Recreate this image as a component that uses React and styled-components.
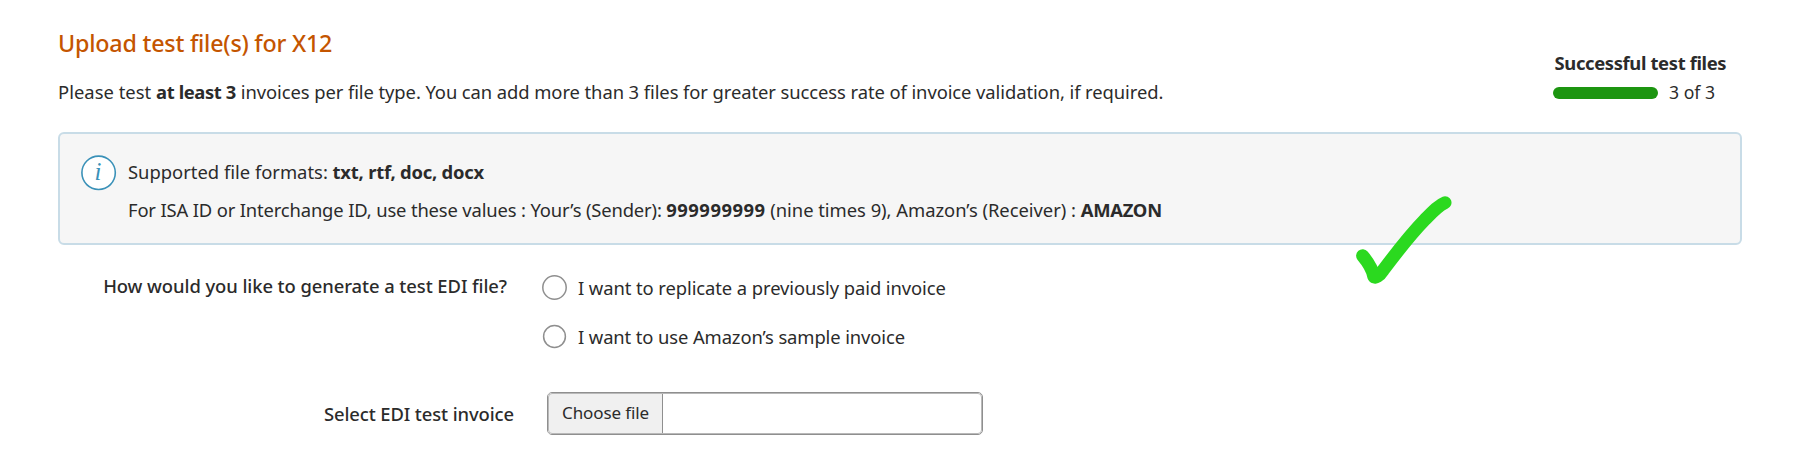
import React from 'react';
import styled, { createGlobalStyle } from 'styled-components';

const GlobalStyle = createGlobalStyle`
  *, *::before, *::after { box-sizing: border-box; }
  body {
    margin: 0;
    background: #fff;
    color: #2b2b2b;
    font-family: 'Noto Sans', 'Open Sans', sans-serif;
    font-size: 18.4px;
    line-height: 26px;
  }
`;

const Page = styled.main`
  position: relative;
  width: 1800px;
  height: 464px;
  padding: 27px 58px 0;
  overflow: hidden;
`;

const Header = styled.header`
  display: flex;
  justify-content: space-between;
  height: 105px;
`;

const Title = styled.h1`
  margin: 0 0 19px;
  font-size: 23.3px;
  line-height: 33px;
  font-weight: 500;
  letter-spacing: -0.22px;
  color: #c45500;
`;

const Line = styled.p`
  margin: 0;
  white-space: nowrap;
`;

const Run = styled.span`
  letter-spacing: ${({ $track }) => $track || 0}px;
`;

const Strong = styled.strong`
  font-weight: 700;
  letter-spacing: ${({ $track }) => $track || 0}px;
`;

const Status = styled.section`
  width: 189px;
  padding-top: 23px;
`;

const StatusTitle = styled.h2`
  margin: 0 0 3px 1.5px;
  font-size: 18.4px;
  line-height: 26px;
  font-weight: 700;
  letter-spacing: -0.35px;
`;

const Progress = styled.div`
  display: flex;
  align-items: center;
  gap: 11px;
  font-size: 17.6px;
`;

const Bar = styled.div`
  width: 105px;
  height: 12px;
  margin-top: 2px;
  border-radius: 6px;
  background: #1c9510;
`;

const Notice = styled.section`
  display: flex;
  gap: 11px;
  width: 1684px;
  height: 113px;
  padding: 21px 21px 0;
  border: 2px solid #c8dce7;
  border-radius: 6px;
  background: #f6f6f6;
`;

const InfoIcon = styled.svg`
  flex: none;
  width: 36px;
  height: 36px;
`;

const NoticeBody = styled.div`
  display: grid;
  gap: 12px;
  align-content: start;
  padding-top: 4px;
`;

const Form = styled.form`
  display: grid;
  grid-template-columns: 449px 1fr;
  margin-top: 28px;
`;

const Label = styled.div`
  justify-self: end;
  font-weight: 500;
  letter-spacing: ${({ $track }) => $track}px;
  white-space: nowrap;
`;

const Options = styled.div`
  display: grid;
  gap: 23px;
  padding: 2px 0 0 35px;
`;

const Option = styled.label`
  display: flex;
  align-items: center;
  gap: 11px;
  height: 26px;
  letter-spacing: ${({ $track }) => $track}px;
`;

const RadioMark = styled.svg`
  flex: none;
  width: 25px;
  height: 25px;
  margin-top: -1px;
  fill: #fff;
  stroke: #8f8f8f;
  stroke-width: 1.5;
`;

const FileRow = styled.div`
  display: grid;
  grid-template-columns: 456px 436px;
  column-gap: 33px;
  align-items: center;
  margin-top: 42px;
`;

const FileField = styled.div`
  display: flex;
  height: 43px;
  border: 1px solid #8f8f8f;
  outline: 0.5px solid #b9b9b9;
  outline-offset: -2px;
  border-radius: 5px;
  overflow: hidden;
`;

const ChooseButton = styled.button`
  width: 115px;
  margin: 0;
  padding: 0 0 2px 14px;
  border: 0;
  border-right: 1px solid #8f8f8f;
  background: #f0f0f0;
  color: inherit;
  font-family: inherit;
  font-size: 17px;
  letter-spacing: -0.1px;
  text-align: left;
`;

const Tick = styled.svg`
  position: absolute;
  left: 1350px;
  top: 190px;
  width: 110px;
  height: 100px;
`;

function Radio({ radius }) {
  return (
    <RadioMark viewBox="0 0 25 25">
      <circle cx="12.5" cy="12.5" r={radius} />
    </RadioMark>
  );
}

export default function App() {
  return (
    <Page>
      <GlobalStyle />
      <Header>
        <div>
          <Title>Upload test file(s) for X12</Title>
          <Line>
            <Run $track={0.02}>Please test </Run>
            <Strong $track={-0.38}>at least 3</Strong>{' '}
            <Run $track={-0.08}>
              invoices per file type. You can add more than 3 files for greater success rate of invoice validation, if required.
            </Run>
          </Line>
        </div>
        <Status>
          <StatusTitle>Successful test files</StatusTitle>
          <Progress>
            <Bar />
            <span>3 of 3</span>
          </Progress>
        </Status>
      </Header>

      <Notice>
        <InfoIcon viewBox="0 0 36 36">
          <circle cx="17.6" cy="17.8" r="16.7" fill="#fff" stroke="#3a91b8" strokeWidth="1.6" />
          <text x="17" y="25" textAnchor="middle" fontFamily="Liberation Serif, serif" fontStyle="italic" fontSize="25" fill="#3a91b8">i</text>
        </InfoIcon>
        <NoticeBody>
          <Line>
            Supported file formats: <Strong $track={-0.22}>txt, rtf, doc, docx</Strong>
          </Line>
          <Line>
            <Run $track={-0.15}>For ISA ID or Interchange ID, use these values : Your’s (Sender): </Run>
            <Strong $track={0.5}>999999999</Strong>{' '}
            <Run $track={-0.03}>(nine times 9), Amazon’s (Receiver) : </Run>
            <Strong $track={-0.27}>AMAZON</Strong>
          </Line>
        </NoticeBody>
      </Notice>

      <Form>
        <Label $track={-0.07}>How would you like to generate a test EDI file?</Label>
        <Options>
          <Option $track={-0.08}>
            <Radio radius={11.7} />
            I want to replicate a previously paid invoice
          </Option>
          <Option $track={-0.11}>
            <Radio radius={10.9} />
            I want to use Amazon’s sample invoice
          </Option>
        </Options>
      </Form>
      <FileRow>
        <Label $track={-0.1}>Select EDI test invoice</Label>
        <FileField>
          <ChooseButton type="button">Choose file</ChooseButton>
        </FileField>
      </FileRow>

      <Tick viewBox="0 0 110 100" fill="none" stroke="#2bd91f" strokeWidth="13" strokeLinecap="round" strokeLinejoin="round">
        <path d="M12.6 65.7C17.500 71.500 22.500 79.500 23.800 86.500C25 88.500 29.500 86 33 80.500C48 60.500 58 47 75 29.500C83 21.300 89 15 95 12.700" />
      </Tick>
    </Page>
  );
}
